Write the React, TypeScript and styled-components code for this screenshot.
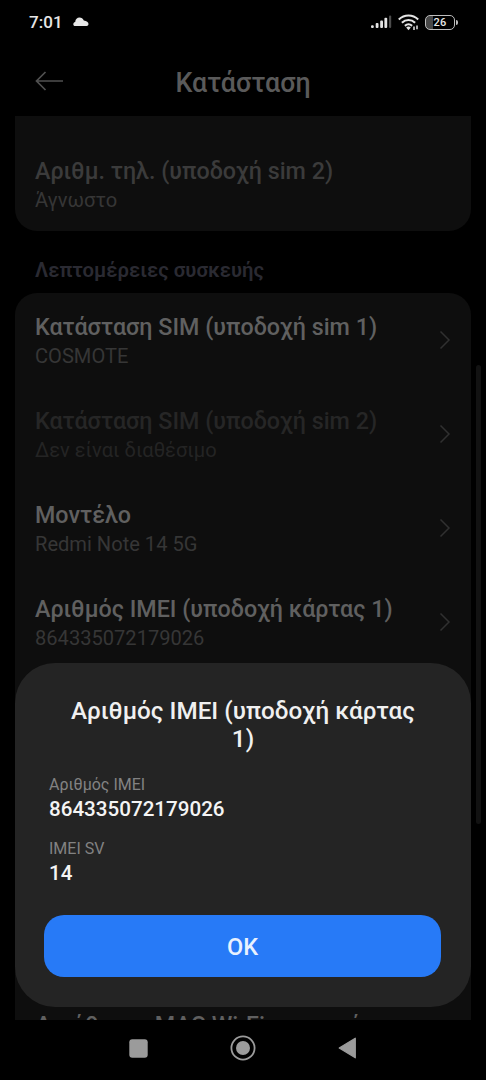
import React from 'react';
import styled, { createGlobalStyle } from 'styled-components';

const GlobalStyle = createGlobalStyle`
  * { box-sizing: border-box; }
  body { margin: 0; background: #000; }
`;

const Screen = styled.div`
  position: relative;
  display: flex;
  flex-direction: column;
  width: 486px;
  height: 1080px;
  overflow: hidden;
  background: #000;
  font-family: Roboto, 'Noto Sans', sans-serif;
`;

const StatusBar = styled.div`
  display: flex;
  align-items: center;
  justify-content: space-between;
  height: 44px;
  padding: 0 30px 0 29px;
`;

const StatusGroup = styled.div<{ $gap: number }>`
  display: flex;
  align-items: center;
  gap: ${(p) => p.$gap}px;
`;

const Clock = styled.span`
  font-size: 17px;
  font-weight: 500;
  line-height: 20px;
  letter-spacing: 0.1px;
  color: #e6e6e6;
`;

const Header = styled.header`
  display: grid;
  grid-template-columns: 64px 1fr 64px;
  align-items: center;
  height: 72px;
  padding-top: 5px;
`;

const BackButton = styled.button`
  display: flex;
  padding: 0 0 4px 35px;
  border: 0;
  background: none;
`;

const PageTitle = styled.h1`
  margin: 0;
  font-size: 26.8px;
  font-weight: 500;
  line-height: 32px;
  text-align: center;
  color: #5a5a5a;
`;

const List = styled.main`
  display: flex;
  flex-direction: column;
  height: 904px;
  padding: 0 15px;
  overflow: hidden;
`;

const Card = styled.section<{ $part: 'end' | 'start' }>`
  flex: none;
  padding-top: ${(p) => (p.$part === 'end' ? 21 : 0)}px;
  border-radius: ${(p) => (p.$part === 'end' ? '0 0 22px 22px' : '22px 22px 0 0')};
  background: #0e0e0e;
`;

const SectionLabel = styled.h2`
  flex: none;
  height: 62px;
  margin: 0;
  padding: 25px 20px 0;
  font-size: 20.3px;
  font-weight: 600;
  line-height: 28px;
  color: #2a2a32;
`;

const Row = styled.div<{ $offset?: number }>`
  display: flex;
  align-items: center;
  justify-content: space-between;
  height: 94px;
  margin-top: ${(p) => p.$offset ?? 0}px;
  padding: 0 20px;
`;

const RowText = styled.div`
  padding-top: 3px;
`;

const RowTitle = styled.div<{ $color: string }>`
  font-size: 23.3px;
  font-weight: 500;
  line-height: 29px;
  white-space: nowrap;
  color: ${(p) => p.$color};
`;

const RowValue = styled.div<{ $color: string }>`
  height: 29px;
  font-size: 20.1px;
  line-height: 29px;
  white-space: nowrap;
  color: ${(p) => p.$color};
`;

const ScrollThumb = styled.div`
  position: absolute;
  top: 365px;
  right: 5px;
  width: 5px;
  height: 459px;
  border-radius: 3px;
  background: #121212;
`;

const Dialog = styled.div`
  position: absolute;
  left: 15px;
  right: 15px;
  bottom: 73px;
  height: 344px;
  padding: 34px 29px 30px;
  display: flex;
  flex-direction: column;
  border-radius: 40px;
  background: #242424;
`;

const DialogTitle = styled.h2`
  margin: 0 0 20px;
  padding: 0 20px;
  font-size: 24.25px;
  font-weight: 500;
  line-height: 28px;
  text-align: center;
  color: #f0f0f0;
`;

const Field = styled.div`
  height: 63.5px;
  padding-left: 5px;
`;

const FieldLabel = styled.div`
  font-size: 16px;
  line-height: 24px;
  color: #828282;
`;

const FieldValue = styled.div`
  font-size: 20.6px;
  font-weight: 500;
  line-height: 25px;
  color: #f4f4f4;
`;

const OkButton = styled.button`
  flex: none;
  width: 397px;
  height: 62px;
  margin-top: auto;
  padding: 2px 0 0;
  border: 0;
  border-radius: 20px;
  background: #277af7;
  font-family: inherit;
  font-size: 23.5px;
  font-weight: 500;
  color: #e8f1ff;
`;

const NavBar = styled.nav`
  display: flex;
  align-items: center;
  justify-content: space-between;
  height: 60px;
  padding: 0 129px 4px;
`;

const CloudIcon = () => (
  <svg width="16" height="10" viewBox="0 0 16 10" fill="#e8e8e8">
    <path d="M2.200 9.100C.9 9.100.3 8.200.3 7.200c0-1.300.8-2.100 1.900-2.300C2.400 2.200 4.200.5 6.500.5c2 0 3.500 1 4.300 2.900 2.800.3 4.700 1.800 4.700 3.700 0 1.200-.8 2-1.900 2Z" />
  </svg>
);

const SignalIcon = () => (
  <svg width="21" height="14" viewBox="0 0 21 14" fill="#e4e4e4">
    <rect x="0" y="10.300" width="2.800" height="2.700" rx="1.100" />
    <rect x="4.700" y="8" width="2.800" height="5" rx="1" />
    <rect x="9.200" y="5.500" width="2.800" height="7.500" rx="1" />
    <rect x="13.400" y="2.800" width="2.800" height="10.200" rx="1" />
    <rect x="18" y="0.600" width="2.200" height="12.400" rx="1" fill="#4c4c4c" />
  </svg>
);

const WifiIcon = () => (
  <svg width="21" height="17" viewBox="0 0 21 17" fill="none" stroke="#e4e4e4" strokeWidth="2.100">
    <path d="M.8 5.500C6.300.2 14.700.2 20.200 5.500" />
    <path d="M3.900 8.800c3.800-3.700 9.400-3.700 13.200 0" />
    <path d="M6.900 11.900c2.200-2 5-2 7.200 0" />
    <path d="M8.200 13.400q2.300-1.700 4.600 0L10.500 16.200Z" fill="#e4e4e4" stroke="none" />
    <path d="M16 12.500V16M19 11.500v3.700" strokeWidth="1.500" />
  </svg>
);

const Battery = styled.div`
  position: relative;
  display: flex;
  align-items: center;
  justify-content: center;
  width: 30px;
  height: 15px;
  margin-right: 1px;
  border: 1.500px solid #bdbdbd;
  border-radius: 5px;
  background: linear-gradient(90deg, #484848 7px, #000 7px);
  font-size: 11px;
  font-weight: 500;
  line-height: 13px;
  letter-spacing: 0.3px;
  color: #e8e8e8;

  &::after {
    content: '';
    position: absolute;
    right: -3.500px;
    top: 4px;
    width: 2px;
    height: 5px;
    border-radius: 0 2px 2px 0;
    background: #bdbdbd;
  }
`;

const BackArrow = () => (
  <svg width="29" height="20" viewBox="0 0 29 20" fill="none" stroke="#505050" strokeWidth="1.700">
    <path d="M28 10H1.500M10.500 1L1.500 10L10.500 19" />
  </svg>
);

const Chevron = () => (
  <svg width="12" height="20" viewBox="0 0 12 20" fill="none" stroke="#303030" strokeWidth="1.500">
    <path d="M1.500 1.500L10 10L1.500 18.500" />
  </svg>
);

type Item = { title: string; value: string; disabled?: boolean };

const items: Item[] = [
  { title: 'Κατάσταση SIM (υποδοχή sim 1)', value: 'COSMOTE' },
  { title: 'Κατάσταση SIM (υποδοχή sim 2)', value: 'Δεν είναι διαθέσιμο', disabled: true },
  { title: 'Μοντέλο', value: 'Redmi Note 14 5G' },
  { title: 'Αριθμός IMEI (υποδοχή κάρτας 1)', value: '864335072179026' },
];

export default function App() {
  return (
    <Screen>
      <GlobalStyle />
      <StatusBar>
        <StatusGroup $gap={10}>
          <Clock>7:01</Clock>
          <CloudIcon />
        </StatusGroup>
        <StatusGroup $gap={6}>
          <SignalIcon />
          <WifiIcon />
          <Battery>26</Battery>
        </StatusGroup>
      </StatusBar>
      <Header>
        <BackButton aria-label="Πίσω">
          <BackArrow />
        </BackButton>
        <PageTitle>Κατάσταση</PageTitle>
      </Header>
      <List>
        <Card $part="end">
          <Row>
            <RowText>
              <RowTitle $color="#3b3b3b">Αριθμ. τηλ. (υποδοχή sim 2)</RowTitle>
              <RowValue $color="#363636">Άγνωστο</RowValue>
            </RowText>
          </Row>
        </Card>
        <SectionLabel>Λεπτομέρειες συσκευής</SectionLabel>
        <Card $part="start">
          {items.map((item) => (
            <Row key={item.title}>
              <RowText>
                <RowTitle $color={item.disabled ? '#262626' : '#606060'}>{item.title}</RowTitle>
                <RowValue $color={item.disabled ? '#242424' : '#363636'}>{item.value}</RowValue>
              </RowText>
              <Chevron />
            </Row>
          ))}
          <Row $offset={322}>
            <RowText>
              <RowTitle $color="#606060">Διεύθυνση MAC Wi-Fi συσκευής</RowTitle>
              <RowValue $color="#363636" />
            </RowText>
          </Row>
        </Card>
      </List>
      <NavBar>
        <svg width="19" height="19" viewBox="0 0 19 19">
          <rect x="0.300" y="0.300" width="18.400" height="18.400" rx="3" fill="#9b9b9b" />
        </svg>
        <svg width="26" height="26" viewBox="0 0 26 26">
          <circle cx="13" cy="13" r="11.600" fill="none" stroke="#9b9b9b" strokeWidth="1.800" />
          <circle cx="13" cy="13" r="7" fill="#9b9b9b" />
        </svg>
        <svg width="19" height="22" viewBox="0 0 19 22">
          <path d="M17.300 1.200V20.800L1.200 11Z" fill="#9b9b9b" stroke="#9b9b9b" strokeWidth="1.200" strokeLinejoin="round" />
        </svg>
      </NavBar>
      <ScrollThumb />
      <Dialog role="dialog">
        <DialogTitle>Αριθμός IMEI (υποδοχή κάρτας 1)</DialogTitle>
        <Field>
          <FieldLabel>Αριθμός IMEI</FieldLabel>
          <FieldValue>864335072179026</FieldValue>
        </Field>
        <Field>
          <FieldLabel>IMEI SV</FieldLabel>
          <FieldValue>14</FieldValue>
        </Field>
        <OkButton>OK</OkButton>
      </Dialog>
    </Screen>
  );
}
